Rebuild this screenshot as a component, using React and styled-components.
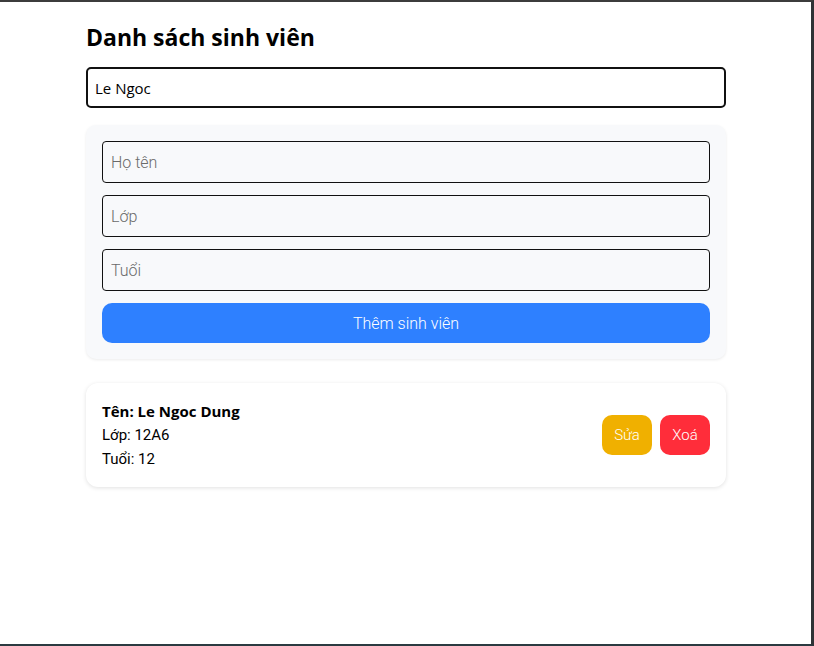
import { useState } from "react";
import styled, { createGlobalStyle } from "styled-components";

const GlobalStyle = createGlobalStyle`
  html, body {
    margin: 0;
    padding: 0;
    background: #ffffff;
  }
  body {
    font-family: "Open Sans", "Noto Sans", sans-serif;
    color: #000;
  }
  * {
    box-sizing: border-box;
  }
`;

const Frame = styled.div`
  width: 814px;
  height: 646px;
  border-top: 2px solid #3c3c3c;
  border-right: 3px solid #2f3336;
  border-bottom: 2px solid #2b3a40;
  background: #ffffff;
  overflow: hidden;
`;

const Container = styled.div`
  width: 640px;
  margin-left: 86px;
  padding-top: 20px;
`;

const Title = styled.h2`
  margin: 0 0 15px 0;
  font-size: 23px;
  line-height: 30px;
  font-weight: 700;
`;

const SearchInput = styled.input`
  width: 100%;
  height: 41px;
  padding: 0 7px;
  border: 2px solid #111;
  border-radius: 5px;
  font-family: "Open Sans", sans-serif;
  font-size: 15px;
  color: #000;
  outline: none;
  margin-bottom: 17px;
  caret-color: #000;
`;

const FormCard = styled.div`
  background: #f8f9fb;
  border-radius: 10px;
  padding: 16px;
  display: flex;
  flex-direction: column;
  gap: 12px;
  box-shadow: 0 1px 3px rgba(0, 0, 0, 0.08);
`;

const Field = styled.input`
  width: 100%;
  height: 42px;
  padding: 0 8px;
  background: transparent;
  border: 1px solid #111;
  border-radius: 4px;
  font-family: Roboto, "Noto Sans", sans-serif;
  font-weight: 300;
  font-size: 16px;
  outline: none;
  &::placeholder {
    color: #6a6a6a;
  }
`;

const AddButton = styled.button`
  height: 40px;
  border: none;
  border-radius: 10px;
  background: #2e80ff;
  color: #fff;
  font-family: Roboto, "Noto Sans", sans-serif;
  font-weight: 300;
  font-size: 16px;
  cursor: pointer;
`;

const List = styled.div`
  margin-top: 24px;
  display: flex;
  flex-direction: column;
  gap: 16px;
`;

const StudentCard = styled.div`
  background: #fff;
  border-radius: 12px;
  padding: 16px;
  display: flex;
  align-items: center;
  justify-content: space-between;
  box-shadow: 0 1px 4px rgba(0, 0, 0, 0.12);
`;

const Info = styled.div`
  display: flex;
  flex-direction: column;
`;

const Line = styled.div`
  line-height: 24px;
  font-size: 15px;
  font-weight: ${(p) => (p.$bold ? 700 : 400)};
  font-family: ${(p) =>
    p.$bold ? `"Open Sans", sans-serif` : `Roboto, "Noto Sans", sans-serif`};
`;

const Actions = styled.div`
  display: flex;
  gap: 8px;
`;

const ActionButton = styled.button`
  width: 50px;
  height: 40px;
  border: none;
  border-radius: 10px;
  background: ${(p) => p.$color};
  color: #fff;
  font-family: Roboto, "Noto Sans", sans-serif;
  font-weight: 300;
  font-size: 15px;
  padding: 0;
`;

export default function App() {
  const [search, setSearch] = useState("Le Ngoc ");
  const students = [{ name: "Le Ngoc Dung", lop: "12A6", age: 12 }];

  return (
    <Frame>
      <GlobalStyle />
      <Container>
        <Title>Danh sách sinh viên</Title>
        <SearchInput
          value={search}
          onChange={(e) => setSearch(e.target.value)}
          autoFocus
        />
        <FormCard>
          <Field placeholder="Họ tên" />
          <Field placeholder="Lớp" />
          <Field placeholder="Tuổi" />
          <AddButton>Thêm sinh viên</AddButton>
        </FormCard>
        <List>
          {students.map((s) => (
            <StudentCard key={s.name}>
              <Info>
                <Line $bold>Tên: {s.name}</Line>
                <Line>Lớp: {s.lop}</Line>
                <Line>Tuổi: {s.age}</Line>
              </Info>
              <Actions>
                <ActionButton $color="#f0b000">Sửa</ActionButton>
                <ActionButton $color="#ff2d3a">Xoá</ActionButton>
              </Actions>
            </StudentCard>
          ))}
        </List>
      </Container>
    </Frame>
  );
}
